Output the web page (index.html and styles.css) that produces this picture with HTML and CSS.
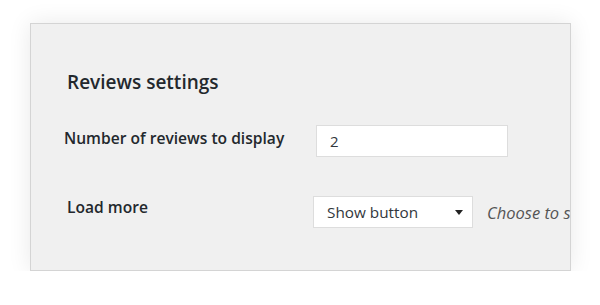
FILE: index.html
```html
<!DOCTYPE html>
<html lang="en">
<head>
<meta charset="UTF-8" />
<title>Reviews settings</title>
<link rel="stylesheet" href="styles.css">
</head>
<body>

<div class="panel">
  <h2 class="panel-title">Reviews settings</h2>

  <div class="row row-number">
    <label class="row-label" for="reviews-count">Number of reviews to display</label>
    <div class="row-field">
      <input type="text" id="reviews-count" class="text-input" value="2" />
    </div>
  </div>

  <div class="row row-more">
    <label class="row-label" for="load-more">Load more</label>
    <div class="row-field">
      <div class="select">
        <span class="select-value">Show button</span>
        <span class="select-arrow"></span>
      </div>
      <span class="description">Choose to show a button or load reviews on scroll</span>
    </div>
  </div>
</div>

</body>
</html>
```

FILE: styles.css
```css
body {
  margin: 0;
  background: #fff;
  font-family: 'Open Sans', 'Noto Sans', sans-serif;
  color: #23282d;
}
.panel {
  margin: 23px 0 0 30px;
  width: 539px;
  height: 246px;
  background: #f0f0f0;
  border: 1px solid #d4d4d4;
  box-shadow: 0 0 22px rgba(0,0,0,0.09);
  overflow: hidden;
}
.panel-title {
  margin: 45px 0 0 36px;
  font-size: 19px;
  font-weight: 600;
  line-height: 26px;
}
.row {
  display: flex;
  white-space: nowrap;
}
.row-label {
  flex: none;
  font-size: 15.6px;
  font-weight: 600;
  line-height: 22px;
}
.row-field {
  display: flex;
  align-items: center;
}
.row-number {
  margin-top: 30px;
  margin-left: 33px;
}
.row-number .row-label {
  padding-top: 2px;
  width: 252px;
}
.row-more {
  margin-top: 39px;
  margin-left: 36px;
}
.row-more .row-label {
  width: 246px;
}
.text-input {
  width: 192px;
  height: 32px;
  box-sizing: border-box;
  border: 1px solid #ddd;
  background: #fff;
  padding: 0 13px;
  font-family: inherit;
  font-size: 15px;
  color: #32373c;
  outline: none;
}
.select {
  width: 160px;
  height: 32px;
  box-sizing: border-box;
  border: 1px solid #ddd;
  background: #fff;
  display: flex;
  align-items: center;
  justify-content: space-between;
  padding: 0 9px 0 13px;
  font-size: 15.3px;
  color: #32373c;
}
.select-arrow {
  width: 0;
  height: 0;
  border-left: 4px solid transparent;
  border-right: 4px solid transparent;
  border-top: 5px solid #222;
}
.description {
  margin-left: 14px;
  font-size: 16.5px;
  font-style: italic;
  color: #555;
}
```
